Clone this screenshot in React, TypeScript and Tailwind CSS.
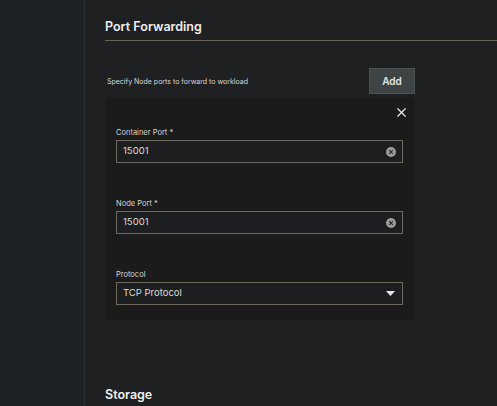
import { X } from 'lucide-react';

function ClearIcon() {
    return (
        <svg width="10" height="10" viewBox="0 0 10 10">
            <circle cx="5" cy="5" r="5" fill="#9b9b9b" />
            <path d="M3.2 3.2 L6.8 6.8 M6.8 3.2 L3.2 6.8" stroke="#2a2a2a" strokeWidth="1.2" />
        </svg>
    );
}

function Field({ label, value }: { label: string; value: string }) {
    return (
        <div className="flex flex-col">
            <label className="text-[7.5px] text-[#d6d6d6] mb-[2px] leading-[10px]">{label}</label>
            <div className="h-[23px] border border-[#6e695f] bg-[#1d1e20] flex items-center justify-between pl-[6px] pr-[6px]">
                <span className="text-[9.5px] text-[#dcdcdc]">{value}</span>
                <ClearIcon />
            </div>
        </div>
    );
}

export default function App() {
    return (
        <div
            className="flex w-[497px] h-[406px] overflow-hidden bg-[#1f2022]"
            style={{ fontFamily: 'Inter, "Noto Sans", sans-serif' }}
        >
            <aside className="w-[85px] shrink-0 bg-[#1d2124] border-r border-[#2d3033]" />

            <main className="flex-1 pl-[20px] pt-[18px]">
                <section>
                    <h2 className="text-[12.5px] font-semibold text-[#eeeeee] leading-[18px]">Port Forwarding</h2>
                    <div className="mt-[4px] h-px bg-[#6a6257]" />

                    <div className="w-[310px]">
                        <div className="flex items-center justify-between mt-[27px] pl-[2px]">
                            <span className="text-[7px] text-[#d8d8d8] pt-[3px]">Specify Node ports to forward to workload</span>
                            <button className="w-[46px] h-[26px] bg-[#3e4444] border border-[#4b5252] text-[10px] font-semibold text-[#e6e6e6]">
                                Add
                            </button>
                        </div>

                        <div className="mt-[3px] bg-[#1b1b1c] pl-[11px] pr-[12px] pt-[8px] pb-[14px] h-[223px]">
                            <div className="flex justify-end -mr-[6px]">
                                <X className="w-[15px] h-[15px] text-[#f0f0f0]" strokeWidth={1.75} />
                            </div>
                            <div className="mt-[8px] flex flex-col gap-[36px]">
                                <Field label="Container Port *" value="15001" />
                                <Field label="Node Port *" value="15001" />
                                <div className="flex flex-col">
                                    <label className="text-[7.5px] text-[#d6d6d6] mb-[2px] leading-[10px]">Protocol</label>
                                    <div className="h-[23px] border border-[#6e695f] bg-[#1d1e20] flex items-center justify-between pl-[6px] pr-[7px]">
                                        <span className="text-[9.5px] text-[#dcdcdc]">TCP Protocol</span>
                                        <svg width="9" height="6" viewBox="0 0 9 6">
                                            <path d="M0 0 H9 L4.5 5 Z" fill="#e6e6e6" />
                                        </svg>
                                    </div>
                                </div>
                            </div>
                        </div>
                    </div>
                </section>

                <h2 className="mt-[66px] text-[12.5px] font-semibold text-[#eeeeee] leading-[18px]">Storage</h2>
            </main>
        </div>
    );
}
